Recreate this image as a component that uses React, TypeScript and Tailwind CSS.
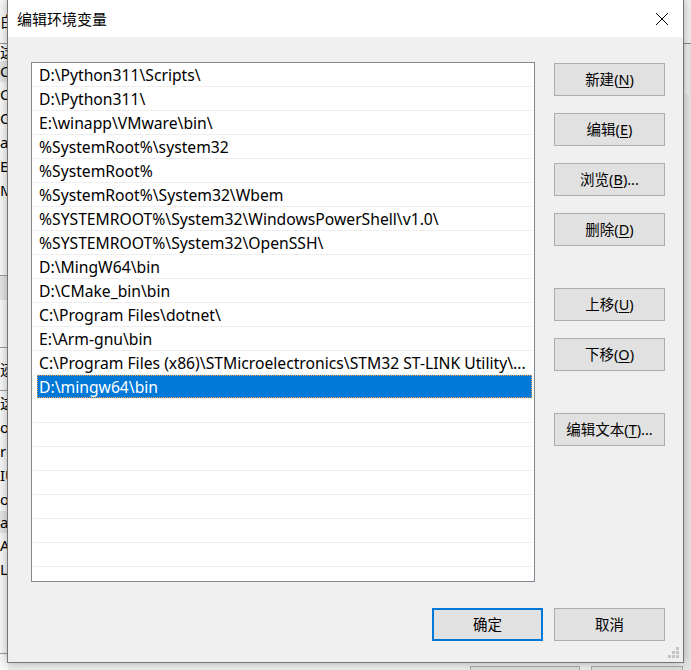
import React from 'react';

const FONT = '"Noto Sans", "Noto Sans CJK SC", sans-serif';

const paths = [
  'D:\\Python311\\Scripts\\',
  'D:\\Python311\\',
  'E:\\winapp\\VMware\\bin\\',
  '%SystemRoot%\\system32',
  '%SystemRoot%',
  '%SystemRoot%\\System32\\Wbem',
  '%SYSTEMROOT%\\System32\\WindowsPowerShell\\v1.0\\',
  '%SYSTEMROOT%\\System32\\OpenSSH\\',
  'D:\\MingW64\\bin',
  'D:\\CMake_bin\\bin',
  'C:\\Program Files\\dotnet\\',
  'E:\\Arm-gnu\\bin',
  'C:\\Program Files (x86)\\STMicroelectronics\\STM32 ST-LINK Utility\\...',
  'D:\\mingw64\\bin',
];

const SELECTED = 13;
const ROW_COUNT = 22;

// bits of the settings window peeking out behind the dialog
const behindRows: { h: number; text: string; shade?: boolean; line?: boolean }[] = [
  { h: 43, text: '白' },
  { h: 1, text: '', line: true },
  { h: 17, text: '这' },
  { h: 21, text: 'C', shade: true },
  { h: 24, text: 'C' },
  { h: 24, text: 'Or' },
  { h: 24, text: 'a' },
  { h: 24, text: 'E' },
  { h: 24, text: 'M' },
  { h: 73, text: '' },
  { h: 1, text: '', line: true },
  { h: 24, text: '', shade: true },
  { h: 47, text: '' },
  { h: 1, text: '', line: true },
  { h: 42, text: '迹' },
  { h: 1, text: '', line: true },
  { h: 24, text: '这' },
  { h: 24, text: 'o' },
  { h: 24, text: 'r' },
  { h: 24, text: 'IU' },
  { h: 24, text: 'os' },
  { h: 22, text: 'a', shade: true },
  { h: 24, text: 'A' },
  { h: 24, text: 'L' },
  { h: 72, text: '' },
  { h: 1, text: '', line: true },
];

const Mnemonic: React.FC<{ label: string; k: string; tail?: string }> = ({ label, k, tail }) => (
  <span>
    {label}(<span className="underline underline-offset-2">{k}</span>){tail}
  </span>
);

const DlgButton: React.FC<{ children: React.ReactNode; primary?: boolean; className?: string }> = ({
  children,
  primary,
  className = '',
}) => (
  <button
    className={`w-[111px] h-[33px] bg-[#e1e1e1] text-[14.5px] text-black flex items-center justify-center ${
      primary ? 'border-2 border-[#0078d7]' : 'border border-[#adadad]'
    } ${className}`}
  >
    {children}
  </button>
);

const PathList: React.FC = () => (
  <div className="w-[504px] h-[520px] border border-[#828790] bg-white overflow-hidden">
    {Array.from({ length: ROW_COUNT }).map((_, i) => {
      const text = paths[i];
      const selected = i === SELECTED;
      return (
        <div key={i} className="h-[24px] flex flex-col">
          <div className="h-[23px] flex pl-[5px] pr-[2px]">
            {text !== undefined && (
              <div
                className={`flex-1 h-full flex items-center pl-[2px] pt-[2px] whitespace-nowrap overflow-hidden text-[15.7px] ${
                  selected
                    ? 'bg-[#0078d7] text-white outline-1 outline-dotted outline-[#f5a04a] -outline-offset-1'
                    : 'text-black'
                }`}
              >
                {text}
              </div>
            )}
          </div>
          <div className="h-[1px] ml-[1px] mr-[2px] bg-[#efefef]" />
        </div>
      );
    })}
  </div>
);

const App: React.FC = () => {
  return (
    <div className="relative w-[691px] h-[670px] overflow-hidden bg-[#f0f0f0]" style={{ fontFamily: FONT }}>
      {/* window behind the dialog */}
      <div className="flex h-full">
        <div className="w-[8px] bg-[#f9f9f9] flex flex-col overflow-hidden">
          {behindRows.map((r, i) => (
            <div
              key={i}
              className={`shrink-0 flex items-center overflow-hidden whitespace-nowrap text-[15px] leading-none text-black ${
                r.line ? 'bg-[#9a9a9a]' : r.shade ? 'bg-[#e5e5e5]' : ''
              }`}
              style={{ height: r.h }}
            >
              {r.text}
            </div>
          ))}
        </div>
        <div className="flex-1 flex flex-col">
          <div className="flex-1" />
          <div className="h-[8px] flex justify-end gap-[11px]">
            <div className="w-[110px] h-[6px] mt-[4px] border border-[#adadad] bg-[#e1e1e1]" />
            <div className="w-[92px] h-[6px] mt-[4px] border border-[#adadad] bg-[#e1e1e1]" />
          </div>
        </div>
        <div className="w-[8px] flex flex-col bg-[#e6e6e6]">
          <div className="h-[43px] bg-[#f3f3f3]" />
          <div className="h-[1px] bg-[#8a8a8a]" />
          <div className="h-[50px] ml-[2px] w-[4px] bg-[#f2f2f2]" />
        </div>
      </div>

      {/* dialog */}
      <div className="absolute left-[7px] -top-[1px] w-[677px] h-[664px] border border-[#767676] bg-[#f0f0f0] shadow-[0_0_10px_rgba(0,0,0,0.3)] flex flex-col">
        <div className="h-[37px] bg-white flex items-center justify-between pl-[9px] pr-[14px] pt-[1px]">
          <span className="text-[15px] text-black">编辑环境变量</span>
          <svg width="14" height="14" viewBox="0 0 14 14">
            <path d="M1 1 L13 13 M13 1 L1 13" stroke="#000" strokeWidth="1" fill="none" />
          </svg>
        </div>

        <div className="flex-1 flex flex-col pl-[23px] pr-[18px] pt-[25px]">
          <div className="flex gap-[19px]">
            <PathList />
            <div className="flex flex-col pt-[1px]">
              <DlgButton>
                <Mnemonic label="新建" k="N" />
              </DlgButton>
              <DlgButton className="mt-[17px]">
                <Mnemonic label="编辑" k="E" />
              </DlgButton>
              <DlgButton className="mt-[17px]">
                <Mnemonic label="浏览" k="B" tail="..." />
              </DlgButton>
              <DlgButton className="mt-[17px]">
                <Mnemonic label="删除" k="D" />
              </DlgButton>
              <DlgButton className="mt-[42px]">
                <Mnemonic label="上移" k="U" />
              </DlgButton>
              <DlgButton className="mt-[17px]">
                <Mnemonic label="下移" k="O" />
              </DlgButton>
              <DlgButton className="mt-[42px]">
                <Mnemonic label="编辑文本" k="T" tail="..." />
              </DlgButton>
            </div>
          </div>

          <div className="flex justify-end gap-[11px] mt-[26px]">
            <DlgButton primary>确定</DlgButton>
            <DlgButton>取消</DlgButton>
          </div>
        </div>

        {/* size grip */}
        <svg width="12" height="12" viewBox="0 0 12 12" className="absolute right-[3px] bottom-[3px]">
          {[
            [8, 0],
            [4, 4],
            [8, 4],
            [0, 8],
            [4, 8],
            [8, 8],
          ].map(([x, y], i) => (
            <rect key={i} x={x} y={y} width="3" height="3" fill="#c4c4c4" />
          ))}
        </svg>
      </div>
    </div>
  );
};

export default App;
